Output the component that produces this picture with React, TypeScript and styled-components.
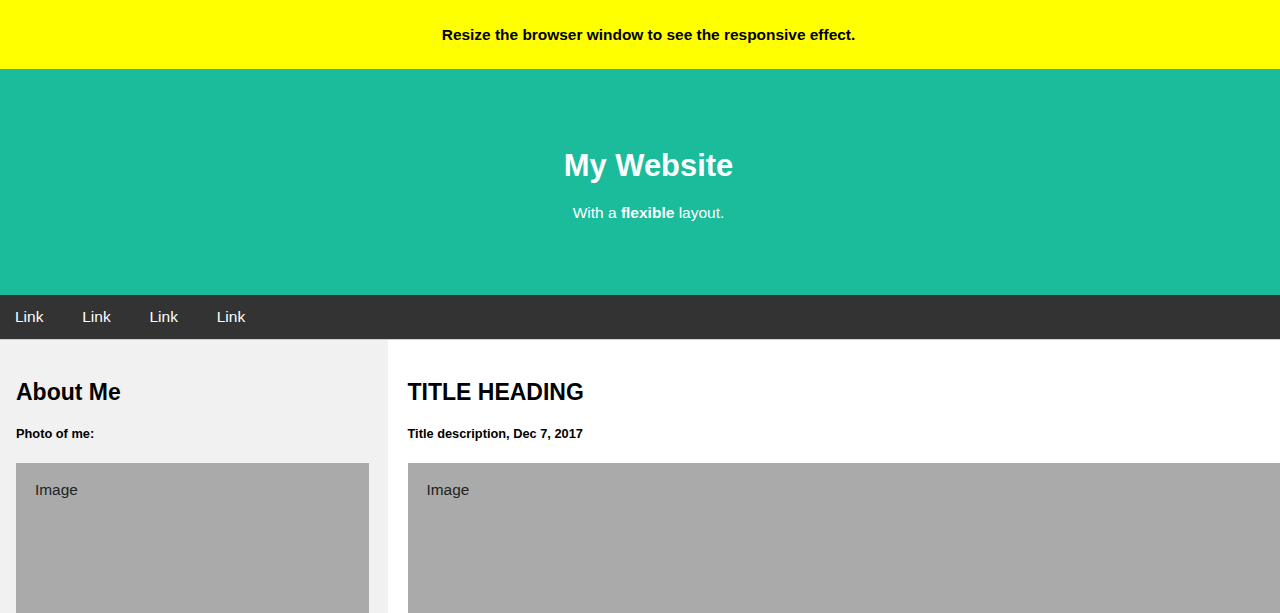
import React from "react";
import styled, { createGlobalStyle } from "styled-components";

const GlobalStyle = createGlobalStyle`
  html, body {
    margin: 0;
    padding: 0;
    font-family: "Liberation Sans", Arial, Helvetica, sans-serif;
    font-size: 15.4px;
    color: #000;
    background: #fff;
    overflow: hidden;
  }
  * { box-sizing: border-box; }
`;

const Notice = styled.div`
  height: 69px;
  background: #ffff00;
  display: flex;
  align-items: center;
  justify-content: center;
  padding-left: 17px;
  font-weight: bold;
  font-size: 15.45px;
`;

const Header = styled.header`
  height: 226px;
  background: #1abc9c;
  color: #fff;
  text-align: center;
  padding: 79px 0 0 17px;
`;

const SiteTitle = styled.h1`
  margin: 0 0 20px;
  font-size: 30.9px;
  font-weight: bold;
`;

const Tagline = styled.p`
  margin: 0;
  font-size: 15.5px;
`;

const Nav = styled.nav`
  background: #333;
  display: flex;
  gap: 8.8px;
  height: 45px;
  align-items: center;
  border-bottom: 1px solid #cfcfcf;
`;

const NavLink = styled.a`
  color: #fff;
  text-decoration: none;
  padding: 0 15px;
  font-size: 15.5px;
  line-height: 44px;
`;

const Row = styled.div`
  display: flex;
  align-items: stretch;
`;

const Side = styled.aside`
  flex: 0 0 388px;
  background: #f1f1f1;
  padding: 20px 19.5px 20px 16px;
`;

const Main = styled.main`
  flex: 1;
  background: #fff;
  padding: 20px 0 20px 19.5px;
  overflow: hidden;
`;

const Heading = styled.h2`
  margin: 19px 0 0;
  font-size: 23px;
  font-weight: bold;
`;

const SubHeading = styled.h5`
  margin: 20px 0 22px;
  font-size: 12.8px;
  font-weight: bold;
`;

const FakeImage = styled.div`
  background: #aaa;
  height: 200px;
  padding: 18px 19px;
  color: #222;
  font-size: 15.4px;
`;

export default function App() {
  return (
    <>
      <GlobalStyle />
      <Notice>Resize the browser window to see the responsive effect.</Notice>
      <Header>
        <SiteTitle>My Website</SiteTitle>
        <Tagline>
          With a <b>flexible</b> layout.
        </Tagline>
      </Header>
      <Nav>
        <NavLink href="#">Link</NavLink>
        <NavLink href="#">Link</NavLink>
        <NavLink href="#">Link</NavLink>
        <NavLink href="#">Link</NavLink>
      </Nav>
      <Row>
        <Side>
          <Heading>About Me</Heading>
          <SubHeading>Photo of me:</SubHeading>
          <FakeImage>Image</FakeImage>
        </Side>
        <Main>
          <Heading>TITLE HEADING</Heading>
          <SubHeading>Title description, Dec 7, 2017</SubHeading>
          <FakeImage>Image</FakeImage>
        </Main>
      </Row>
    </>
  );
}
